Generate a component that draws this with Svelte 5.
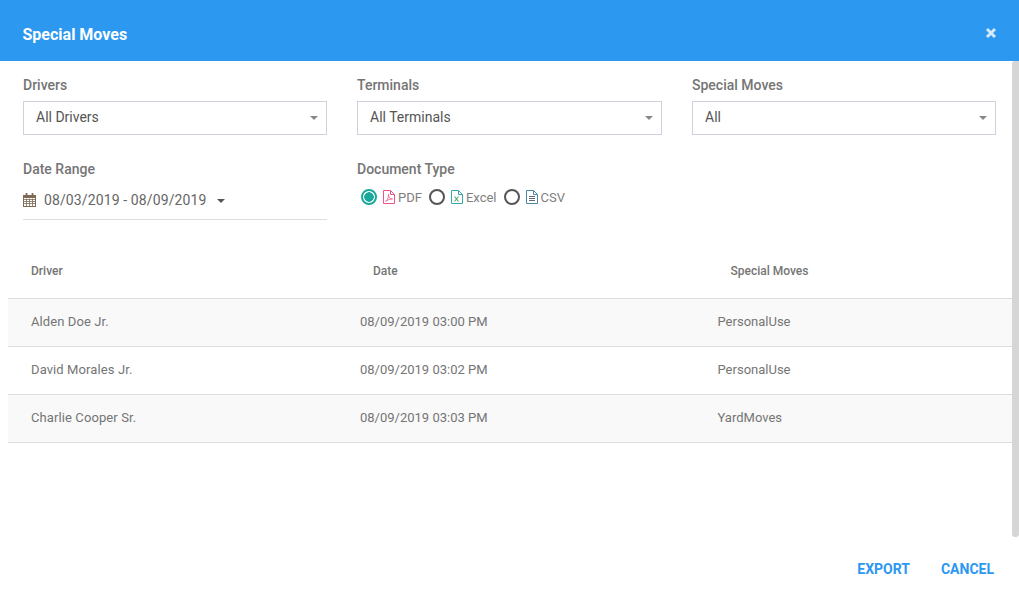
<script lang="ts">
  const rows = [
    { driver: 'Alden Doe Jr.', date: '08/09/2019 03:00 PM', move: 'PersonalUse' },
    { driver: 'David Morales Jr.', date: '08/09/2019 03:02 PM', move: 'PersonalUse' },
    { driver: 'Charlie Cooper Sr.', date: '08/09/2019 03:03 PM', move: 'YardMoves' }
  ];
  const selects = [
    { label: 'Drivers', value: 'All Drivers' },
    { label: 'Terminals', value: 'All Terminals' },
    { label: 'Special Moves', value: 'All' }
  ];
</script>

<div class="dialog">
  <header class="title">
    <h2>Special Moves</h2>
    <svg class="close" viewBox="0 0 12 12" width="12" height="12" aria-label="Close">
      <path d="M2 2l8 8M10 2l-8 8" stroke="#d5eafc" stroke-width="3" fill="none" />
    </svg>
  </header>

  <div class="body">
    <div class="filters">
      {#each selects as s}
        <div class="field">
          <span class="label">{s.label}</span>
          <div class="select">
            <span>{s.value}</span>
            <i class="caret"></i>
          </div>
        </div>
      {/each}
    </div>

    <div class="filters second">
      <div class="field">
        <span class="label">Date Range</span>
        <div class="range">
          <svg viewBox="0 0 13 14" width="13" height="14" fill="none" stroke="#7d6a55" stroke-width="1">
            <rect x="0.5" y="2.5" width="12" height="11" />
            <path d="M0.5 3.500h12M0.5 4.500h12" />
            <path d="M0.5 6.500h12M0.5 8.500h12M0.5 10.500h12M3.500 5.500v8M6.500 5.500v8M9.500 5.500v8" stroke-width="0.8" />
            <path d="M3.500 0v3M9.500 0v3" stroke-width="1.800" />
          </svg>
          <span class="dates">08/03/2019 - 08/09/2019</span>
          <i class="caret dark"></i>
        </div>
      </div>

      <div class="field">
        <span class="label">Document Type</span>
        <div class="types">
          <span class="radio on"></span>
          <svg class="doc" viewBox="0 0 12 14" width="12" height="14" fill="none" stroke="#f0558a">
            <path d="M0.5 0.5h7l4 4v9h-11z" />
            <path d="M7.5 0.5v4h4" />
            <path d="M2.5 11.500c2-1 3-4 3-7 0 3 1.500 4.500 4 4.500-3 0-5 1-7 2.500z" stroke-width="0.8" />
          </svg>
          <span class="type">PDF</span>
          <span class="radio"></span>
          <svg class="doc" viewBox="0 0 12 14" width="12" height="14" fill="none" stroke="#35a9ad">
            <path d="M0.5 0.5h7l4 4v9h-11z" />
            <path d="M7.5 0.500v4h4" />
            <path d="M3.500 6.500l4 5M7.500 6.500l-4 5" stroke="#4aa868" stroke-width="1.100" />
          </svg>
          <span class="type">Excel</span>
          <span class="radio"></span>
          <svg class="doc" viewBox="0 0 12 14" width="12" height="14" fill="none" stroke="#4d87a3">
            <path d="M0.5 0.5h7l4 4v9h-11z" />
            <path d="M7.5 0.500v4h4" />
            <path d="M3 6.500h6M3 8.500h6M3 10.500h6" stroke="#667" />
          </svg>
          <span class="type">CSV</span>
        </div>
      </div>
    </div>

    <div class="table">
      <div class="head">
        <span>Driver</span>
        <span>Date</span>
        <span>Special Moves</span>
      </div>
      {#each rows as r, i}
        <div class="row" class:odd={i % 2 === 0}>
          <span class="name">{r.driver}</span>
          <span>{r.date}</span>
          <span>{r.move}</span>
        </div>
      {/each}
    </div>

    <div class="scrollbar"></div>
  </div>

  <footer class="actions">
    <button>EXPORT</button>
    <button>CANCEL</button>
  </footer>
</div>

<style>
  :global(body) {
    margin: 0;
    background: #fff;
    font-family: Roboto, "Liberation Sans", sans-serif;
  }

  .dialog {
    width: 1019px;
    height: 600px;
    display: flex;
    flex-direction: column;
    overflow: hidden;
  }

  .title {
    box-sizing: border-box;
    height: 61px;
    flex: none;
    background: #2c98f0;
    display: flex;
    align-items: center;
    justify-content: space-between;
    padding: 7px 22px 0 22.5px;
  }

  h2 {
    margin: 0;
    font-size: 16px;
    font-weight: 700;
    color: #fff;
  }

  .close {
    margin-top: -2px;
  }

  .body {
    position: relative;
    height: 476px;
    flex: none;
  }

  .scrollbar {
    position: absolute;
    top: 0;
    right: 0;
    width: 7px;
    height: 476px;
    background: #d6d6d6;
    border-radius: 3px 0 3px 3px;
  }

  .filters {
    display: grid;
    grid-template-columns: 304px 305px 304px;
    column-gap: 30px;
    padding: 16px 0 0 23px;
  }

  .second {
    padding-top: 26px;
  }

  .field {
    display: flex;
    flex-direction: column;
  }

  .label {
    font-size: 14px;
    font-weight: 500;
    line-height: 16px;
    color: #757575;
  }

  .select {
    box-sizing: border-box;
    height: 34px;
    margin-top: 8px;
    border: 1px solid #cfd1dc;
    display: flex;
    align-items: center;
    justify-content: space-between;
    padding: 0 8px 2px 12px;
    font-size: 14px;
    color: #555;
  }

  .caret {
    width: 0;
    height: 0;
    border-left: 4px solid transparent;
    border-right: 4px solid transparent;
    border-top: 4px solid #888;
    margin-top: 1px;
  }

  .caret.dark {
    border-top-color: #555;
    margin-left: 10px;
    margin-top: 1px;
  }

  .range {
    box-sizing: border-box;
    height: 39px;
    display: flex;
    align-items: center;
    border-bottom: 1px solid #ddd;
    margin-top: 4px;
    font-size: 14px;
    color: #666;
  }

  .dates {
    margin-left: 8px;
    letter-spacing: 0.12px;
  }

  .types {
    display: flex;
    align-items: center;
    height: 26px;
    margin-top: 7px;
    padding-left: 4px;
    font-size: 13px;
    color: #808080;
  }

  .radio {
    box-sizing: border-box;
    width: 16px;
    height: 16px;
    border: 2px solid #555;
    border-radius: 50%;
    flex: none;
  }

  .radio.on {
    border-color: #1aa99a;
    background: radial-gradient(circle, #1aa99a 0 4.5px, #fff 5px);
  }

  .doc {
    margin-left: 6px;
    flex: none;
  }

  .type {
    margin: 0 7px 0 3px;
  }

  .table {
    margin: 23px 0 0 8px;
    font-size: 13px;
    color: #757575;
  }

  .head,
  .row {
    display: grid;
    grid-template-columns: 329px 357.500px 1fr;
    box-sizing: border-box;
    align-items: center;
    border-bottom: 1px solid #ddd;
    padding-left: 23px;
  }

  .head {
    height: 56px;
    font-size: 12px;
    font-weight: 500;
  }

  .head span:nth-child(2),
  .head span:nth-child(3) {
    padding-left: 13px;
  }

  .row {
    height: 48px;
    padding-bottom: 2px;
  }

  .row.odd {
    background: #f9f9f9;
  }

  .name {
    letter-spacing: 0.1px;
  }

  .actions {
    flex: 1;
    display: flex;
    justify-content: flex-end;
    align-items: center;
    gap: 31px;
    padding: 0 25px 0 0;
  }

  button {
    border: 0;
    background: none;
    padding: 0;
    font: 700 14px Roboto, sans-serif;
    color: #2c98f0;
  }
</style>
